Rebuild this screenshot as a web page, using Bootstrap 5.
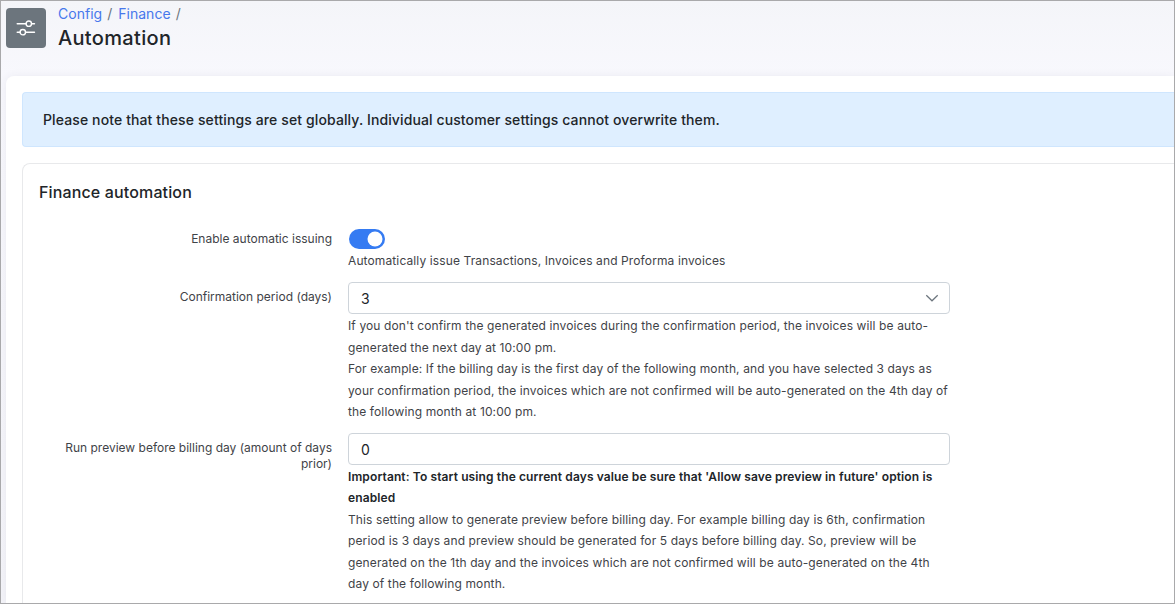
<!DOCTYPE html>
<html lang="en">
<head>
<meta charset="utf-8">
<title>Automation</title>
<meta name="viewport" content="width=device-width, initial-scale=1">
<link href="https://cdn.jsdelivr.net/npm/bootstrap@5.3.0/dist/css/bootstrap.min.css" rel="stylesheet">
<style>
body{font-family:Inter,"Liberation Sans",sans-serif;color:#212529;background:#f6f7fb}
.frame{height:604px;border:1px solid #a9a9ab;background:linear-gradient(#f4f5f9,#f8f8fd 74px,#f4f4f9)}
.page-head{height:75px;padding:7px 0 0 5px;gap:12px}
.page-icon{width:40px;height:40px;background:#6c757d;border-radius:4px}
.crumbs{font-size:14px;line-height:14px;color:#6c757d;letter-spacing:.02px;margin-top:-1px}
.crumbs a{color:#4778ec;text-decoration:none}
.crumb-sep{margin:0 6px 0 5px}
.page-title{font-size:20px;line-height:24px;font-weight:500;letter-spacing:.33px;margin-top:5px}
.main-panel{height:528px;margin-left:5px;border-radius:8px 0 0 0;padding:16px 0 0 16px;box-shadow:0 0 8px rgba(60,60,90,.07)}
.notice{height:55px;background:#dfefff;border:1px solid #cfe6fe;border-right:0;border-radius:4px 0 0 4px;padding:0 20px;font-size:14px;font-weight:500;letter-spacing:.113px;margin-bottom:16px}
.settings{height:441px;border:1px solid #e8e9eb;border-width:1px 0 0 1px;border-radius:8px 0 0 0;padding:16px 0 0 16px}
.settings h2{font-size:16px;line-height:24px;font-weight:500;letter-spacing:.14px;margin:0 0 25px}
.field-row{display:grid;grid-template-columns:293px 602px;column-gap:16px;margin-bottom:10px}
.field-row:first-of-type{margin-bottom:11px}
.field-label{font-size:12px;line-height:16px;letter-spacing:0;text-align:right;color:#3f4348;padding-top:7px}
.field-label.switch-label{padding-top:2px}
.hint{font-size:12px;line-height:21.45px;letter-spacing:.115px;color:#3f4348;white-space:nowrap}
.hint strong{font-weight:600;color:#212529}
.form-switch.toggle{min-height:20px;padding:0 0 0 1px;margin:0 0 1px;line-height:0}
.form-switch.toggle .form-check-input{width:36px;height:20px;margin:0;float:none;background-color:#357bf2;border:0;background-size:20px}
.field-box{height:32px;border:1px solid #ced4da;border-radius:4px;font-size:14px;padding:0 10px 0 12px;margin-bottom:1px;color:#212529}
.text-field{padding-top:2px}
</style>
</head>
<body>
<div class="frame overflow-hidden">
  <header class="page-head d-flex align-items-start">
    <div class="page-icon d-flex align-items-center justify-content-center">
      <svg width="20" height="18" viewBox="0 0 20 18" fill="none" stroke="#fff" stroke-width="1.4" stroke-linecap="round"><path d="M1.2 4.7H10M15.6 4.7H18.5M1.2 13.2H4M9.7 13.2H18.5"/><circle cx="12.8" cy="4.7" r="2.7"/><circle cx="6.8" cy="13.2" r="2.7"/></svg>
    </div>
    <div>
      <nav class="crumbs d-flex"><a href="#">Config</a><span class="crumb-sep">/</span><a href="#">Finance</a><span class="crumb-sep">/</span></nav>
      <h1 class="page-title mb-0">Automation</h1>
    </div>
  </header>
  <main class="main-panel bg-white">
    <div class="notice d-flex align-items-center">Please note that these settings are set globally. Individual customer settings cannot overwrite them.</div>
    <section class="settings">
      <h2>Finance automation</h2>
      <div class="field-row">
        <label class="field-label switch-label" for="issuing">Enable automatic issuing</label>
        <div>
          <div class="form-check form-switch toggle"><input class="form-check-input" type="checkbox" id="issuing" checked></div>
          <div class="hint">Automatically issue Transactions, Invoices and Proforma invoices</div>
        </div>
      </div>
      <div class="field-row">
        <div class="field-label">Confirmation period (days)</div>
        <div>
          <div class="field-box d-flex align-items-center justify-content-between"><span>3</span>
            <svg width="14" height="8" viewBox="0 0 14 8" fill="none" stroke="#6c757d" stroke-width="1.2"><path d="M1.3 1.2L7 6.8L12.7 1.2"/></svg>
          </div>
          <div class="hint">If you don't confirm the generated invoices during the confirmation period, the invoices will be auto-<br>generated the next day at 10:00 pm.<br>For example: If the billing day is the first day of the following month, and you have selected 3 days as<br>your confirmation period, the invoices which are not confirmed will be auto-generated on the 4th day of<br>the following month at 10:00 pm.</div>
        </div>
      </div>
      <div class="field-row">
        <div class="field-label">Run preview before billing day (amount of days<br>prior)</div>
        <div>
          <div class="field-box text-field d-flex align-items-center"><span>0</span></div>
          <div class="hint"><strong>Important: To start using the current days value be sure that 'Allow save preview in future' option is<br>enabled</strong><br>This setting allow to generate preview before billing day. For example billing day is 6th, confirmation<br>period is 3 days and preview should be generated for 5 days before billing day. So, preview will be<br>generated on the 1th day and the invoices which are not confirmed will be auto-generated on the 4th<br>day of the following month.</div>
        </div>
      </div>
    </section>
  </main>
</div>
<script src="https://cdn.jsdelivr.net/npm/bootstrap@5.3.0/dist/js/bootstrap.bundle.min.js"></script>
</body>
</html>
